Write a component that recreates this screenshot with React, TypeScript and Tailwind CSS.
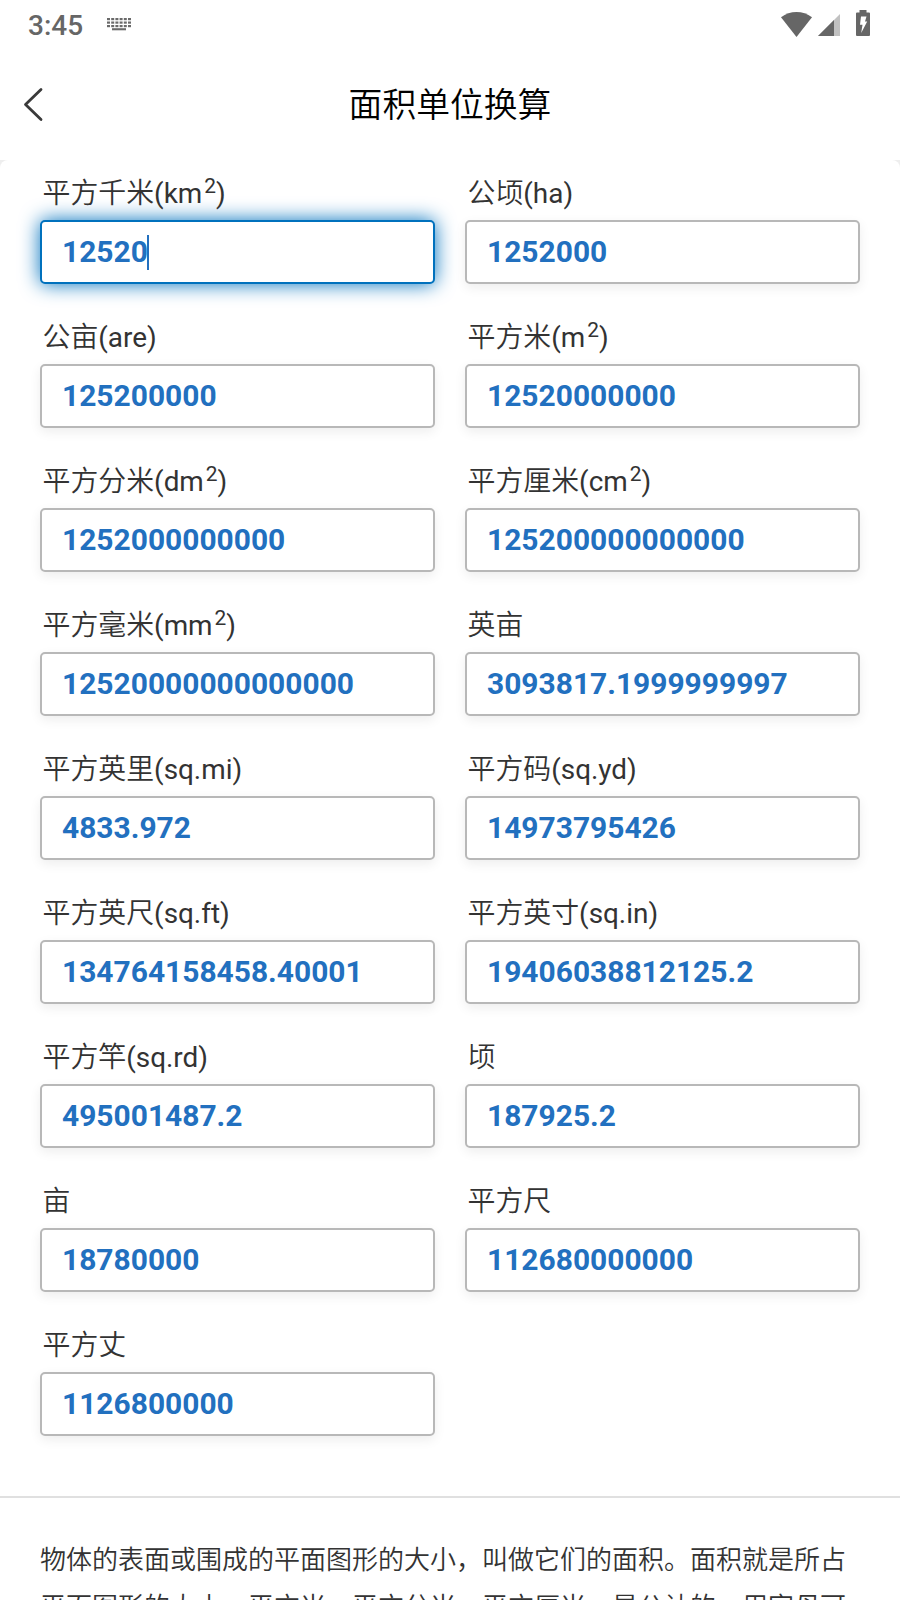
import React from 'react';

interface Unit {
  name: string;
  symbol?: string;
  squared?: boolean;
  value: string;
}

interface UnitFieldProps {
  unit: Unit;
  focused?: boolean;
}

const units: Unit[] = [
  { name: '平方千米', symbol: 'km', squared: true, value: '12520' },
  { name: '公顷', symbol: 'ha', value: '1252000' },
  { name: '公亩', symbol: 'are', value: '125200000' },
  { name: '平方米', symbol: 'm', squared: true, value: '12520000000' },
  { name: '平方分米', symbol: 'dm', squared: true, value: '1252000000000' },
  { name: '平方厘米', symbol: 'cm', squared: true, value: '125200000000000' },
  { name: '平方毫米', symbol: 'mm', squared: true, value: '12520000000000000' },
  { name: '英亩', value: '3093817.1999999997' },
  { name: '平方英里', symbol: 'sq.mi', value: '4833.972' },
  { name: '平方码', symbol: 'sq.yd', value: '14973795426' },
  { name: '平方英尺', symbol: 'sq.ft', value: '134764158458.40001' },
  { name: '平方英寸', symbol: 'sq.in', value: '19406038812125.2' },
  { name: '平方竿', symbol: 'sq.rd', value: '495001487.2' },
  { name: '顷', value: '187925.2' },
  { name: '亩', value: '18780000' },
  { name: '平方尺', value: '112680000000' },
  { name: '平方丈', value: '1126800000' },
];

const KeyboardIcon = () => (
  <svg width="24" height="13" viewBox="0 0 24 13" fill="#6a6a6a">
    {[0, 3.5, 7].map((y) =>
      [0, 4.2, 8.4, 12.6, 16.8, 21].map((x) => (
        <rect key={`${x}-${y}`} x={x} y={y} width="3" height="2.2" />
      ))
    )}
    <rect x="5" y="10.2" width="14" height="2.1" />
  </svg>
);

const StatusBar = () => (
  <div className="flex h-[50px] items-center pr-[30px] pl-7 text-[#666]">
    <span className="pt-0.5 text-[28px] leading-none font-medium">3:45</span>
    <div className="mb-0.5 ml-6">
      <KeyboardIcon />
    </div>
    <svg className="mb-0.5 ml-auto" width="31" height="25" viewBox="0 0 31 25" fill="#666">
      <path d="M15.5 25 0 5.3C4.5 1.9 10 0 15.5 0S26.5 1.9 31 5.3Z" />
    </svg>
    <svg className="ml-1.5" width="22" height="22" viewBox="0 0 22 22">
      <path d="M22 0v22H0Z" fill="#c1c1c1" />
      <path d="M16 6v16H0Z" fill="#666" />
    </svg>
    <svg className="mb-1 ml-4" width="14" height="26" viewBox="0 0 14 26">
      <path d="M3.5 0h7v2.5H13a1 1 0 0 1 1 1V25a1 1 0 0 1-1 1H1a1 1 0 0 1-1-1V3.5a1 1 0 0 1 1-1h2.5Z" fill="#666" />
      <path d="M5 6.5h5.5l-1.5 5h2.2L5.2 23l1.3-8.2H4Z" fill="#fff" />
    </svg>
  </div>
);

const Header = () => (
  <header className="relative flex h-[110px] items-center justify-center pt-0.5">
    <svg
      className="absolute top-[37px] left-[23px]"
      width="21"
      height="36"
      viewBox="0 0 21 36"
      fill="none"
      stroke="#3a3a3a"
      strokeWidth="2.8"
      strokeLinecap="round"
      strokeLinejoin="round"
    >
      <path d="M18 2.5 2.5 17.5 18 32.5" />
    </svg>
    <h1 className="text-[33.8px] leading-none font-[350] text-black">面积单位换算</h1>
  </header>
);

const UnitField: React.FC<UnitFieldProps> = ({ unit, focused = false }) => (
  <div className="h-36">
    <div className="h-[60px] pt-[14px] pl-[2.5px] text-[27.9px] leading-10 font-[350] whitespace-nowrap text-[#333]">
      {unit.name}
      {unit.symbol && (
        <span className="font-normal">
          ({unit.symbol}
          {unit.squared && <sup className="ml-0.5 text-[75%]">2</sup>})
        </span>
      )}
    </div>
    <div
      className={
        focused
          ? 'flex h-16 items-center rounded-[5px] border-2 border-[#0071bd] bg-white pl-5 shadow-[0_0_20px_#0071bd]'
          : 'flex h-16 items-center rounded-[5px] border-2 border-[#b8b8b8] bg-white pl-5 shadow-[0_4px_12px_rgba(0,0,0,0.07)]'
      }
    >
      <span className="text-[29.95px] leading-none font-bold text-[#2270bf]">{unit.value}</span>
      {focused && <span className="-ml-px h-[35px] w-0.5 bg-[#2270bf]" />}
    </div>
  </div>
);

const App: React.FC = () => {
  return (
    <div className="h-[1600px] w-[900px] overflow-hidden bg-white font-[Roboto,'Noto_Sans_CJK_SC',sans-serif]">
      <StatusBar />
      <Header />
      <div className="bg-[#eee]">
        <main className="rounded-t-[8px] bg-white">
          <div className="grid h-[1336px] grid-cols-2 content-start gap-x-[30px] px-10">
            {units.map((unit, index) => (
              <UnitField key={unit.name} unit={unit} focused={index === 0} />
            ))}
          </div>
          <section className="border-t-2 border-[#e0e0e0] px-10 pt-[39px]">
            <p className="text-[26px] leading-[47px] font-[350] whitespace-nowrap text-[#333]">
              物体的表面或围成的平面图形的大小，叫做它们的面积。面积就是所占
              <br />
              平面图形的大小，平方米，平方分米，平方厘米，是公认的，用字母可
            </p>
          </section>
        </main>
      </div>
    </div>
  );
};

export default App;
